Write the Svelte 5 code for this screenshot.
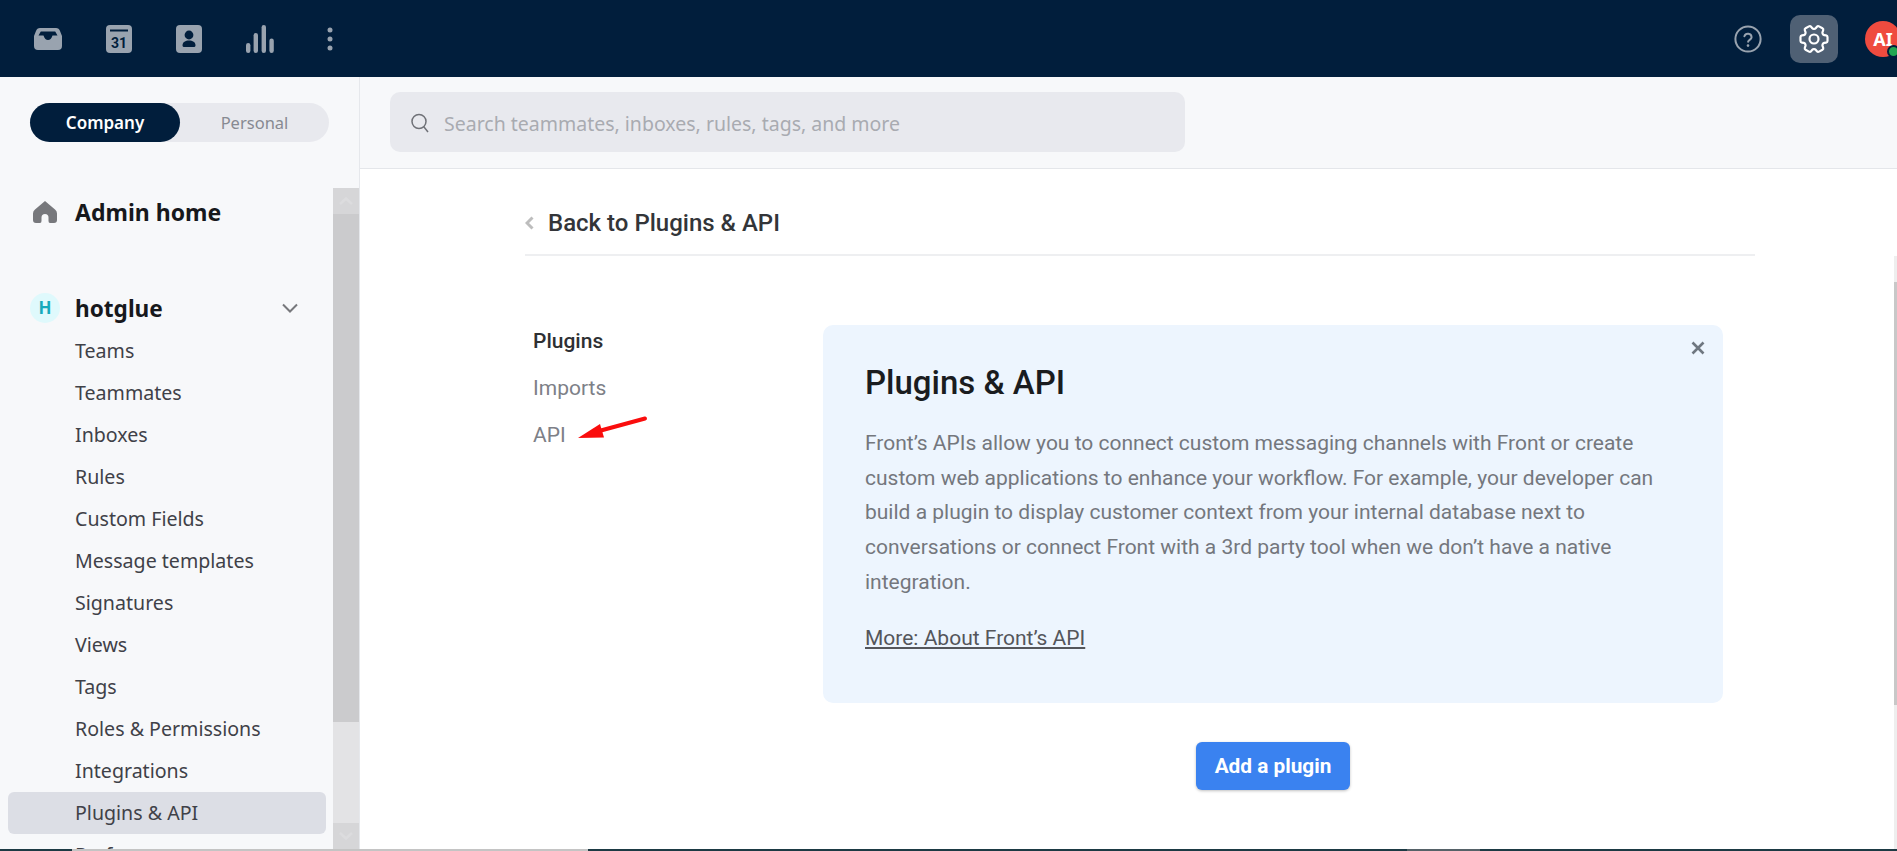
<script>
  const items = ['Teams', 'Teammates', 'Inboxes', 'Rules', 'Custom Fields', 'Message templates', 'Signatures', 'Views', 'Tags', 'Roles & Permissions', 'Integrations', 'Plugins & API', 'Preferences'];
  const active = 'Plugins & API';
</script>

<div class="app">
  <header class="topbar">
    <div class="top-left">
      <svg class="ico" width="28" height="22" viewBox="0 0 28 22">
        <path fill="#99a3af" d="M6 0H22Q25 0 26 3L28 8V18Q28 22 24 22H4Q0 22 0 18V8L2 3Q3 0 6 0Z" />
        <path fill="#011e3c" d="M4.5 7.5L6.8 3.4H21.2L23.5 7.5H18.5C17.5 10.5 16 12 14 12C12 12 10.5 10.5 9.5 7.5Z" />
      </svg>
      <svg class="ico" width="26" height="28" viewBox="0 0 26 28">
        <rect width="26" height="28" rx="4" fill="#99a3af" />
        <rect x="4" y="4.5" width="18" height="2" fill="#011e3c" />
        <text x="13" y="23" text-anchor="middle" class="cal">31</text>
      </svg>
      <svg class="ico" width="26" height="28" viewBox="0 0 26 28">
        <rect width="26" height="28" rx="4" fill="#99a3af" />
        <circle cx="13" cy="10" r="4.4" fill="#011e3c" />
        <path fill="#011e3c" d="M6.5 20.5C6.5 17 9.5 15.6 13 15.6C16.5 15.6 19.5 17 19.5 20.5C19.5 21.5 18.5 22 17.5 22H8.5C7.5 22 6.5 21.5 6.5 20.5Z" />
      </svg>
      <svg class="ico" width="28" height="28" viewBox="0 0 28 28" fill="#99a3af">
        <rect x="0" y="18" width="4.4" height="10" rx="2.2" />
        <rect x="7.6" y="8" width="4.4" height="20" rx="2.2" />
        <rect x="15.6" y="0" width="4.4" height="28" rx="2.2" />
        <rect x="23.4" y="13.5" width="4.4" height="14.5" rx="2.2" />
      </svg>
      <svg class="ico" width="6" height="24" viewBox="0 0 6 24" fill="#99a3af">
        <circle cx="3" cy="3" r="2.5" />
        <circle cx="3" cy="12" r="2.5" />
        <circle cx="3" cy="21" r="2.5" />
      </svg>
    </div>
    <div class="top-right">
      <svg width="28" height="28" viewBox="0 0 28 28" fill="none" stroke="#99a3af" stroke-width="2">
        <circle cx="14" cy="14" r="12.6" />
        <path stroke-linecap="round" d="M10.4 11.2a3.7 3.7 0 0 1 7.2 1c0 2.4-3.500 2.800-3.500 4.600" />
        <circle cx="14" cy="20.600" r="1.300" fill="#99a3af" stroke="none" />
      </svg>
      <div class="gear">
        <svg width="36" height="36" viewBox="0 0 24 24" fill="none" stroke="#fff" stroke-width="1.450">
          <g transform="rotate(90 12 12)">
            <path stroke-linejoin="round" d="M9.594 3.94c.09-.542.56-.94 1.11-.94h2.593c.55 0 1.02.398 1.11.94l.213 1.281c.063.374.313.686.645.87.074.04.147.083.22.127.324.196.72.257 1.075.124l1.217-.456a1.125 1.125 0 011.37.49l1.296 2.247a1.125 1.125 0 01-.26 1.431l-1.003.827c-.293.24-.438.613-.431.992a6.759 6.759 0 010 .255c-.007.378.138.75.43.99l1.005.828c.424.35.534.954.26 1.43l-1.298 2.247a1.125 1.125 0 01-1.369.491l-1.217-.456c-.355-.133-.75-.072-1.076.124a6.57 6.57 0 01-.22.128c-.331.183-.581.495-.644.869l-.213 1.28c-.09.543-.56.941-1.11.941h-2.594c-.55 0-1.02-.398-1.11-.94l-.213-1.281c-.062-.374-.312-.686-.644-.87a6.52 6.52 0 01-.22-.127c-.325-.196-.72-.257-1.076-.124l-1.217.456a1.125 1.125 0 01-1.369-.49l-1.297-2.247a1.125 1.125 0 01.26-1.431l1.004-.827c.292-.24.437-.613.43-.992a6.932 6.932 0 010-.255c.007-.378-.138-.75-.43-.99l-1.004-.828a1.125 1.125 0 01-.26-1.43l1.297-2.247a1.125 1.125 0 011.37-.491l1.216.456c.356.133.751.072 1.076-.124.072-.044.146-.087.22-.128.332-.183.582-.495.644-.869l.214-1.281z" />
            <circle cx="12" cy="12" r="3" />
          </g>
        </svg>
      </div>
      <div class="avatar">AI<span class="online"></span></div>
    </div>
  </header>

  <div class="body">
    <aside class="sidebar">
      <div class="toggle-wrap">
        <div class="toggle">
          <span class="tab on">Company</span>
          <span class="tab">Personal</span>
        </div>
      </div>
      <div class="side-scroll">
        <nav class="side-list">
          <div class="admin">
            <svg width="24" height="22" viewBox="0 0 24 22">
              <path fill="#77787c" d="M12 0L22 8.500Q24 10 24 12.500V19Q24 22 21 22H17Q15.500 22 15.500 20V16.500A3.500 3.500 0 0 0 8.500 16.500V20Q8.500 22 7 22H3Q0 22 0 19V12.500Q0 10 2 8.500Z" />
            </svg>
            <span>Admin home</span>
          </div>
          <div class="org">
            <span class="org-badge">H</span>
            <span class="org-name">hotglue</span>
            <svg class="chev" width="16" height="10" viewBox="0 0 16 10" fill="none" stroke="#77787c" stroke-width="2">
              <path d="M1 1.500L8 8.500L15 1.500" />
            </svg>
          </div>
          {#each items as item}
            <div class="item" class:active={item === active}>{item}</div>
          {/each}
        </nav>
        <div class="bar">
          <div class="bar-btn">
            <svg width="14" height="8" viewBox="0 0 14 8" fill="none" stroke="#dcdcde" stroke-width="2.500"><path d="M1 7L7 1.500L13 7" /></svg>
          </div>
          <div class="bar-thumb"></div>
          <div class="bar-track"></div>
          <div class="bar-btn low">
            <svg width="14" height="8" viewBox="0 0 14 8" fill="none" stroke="#dcdcde" stroke-width="2.500"><path d="M1 1L7 6.500L13 1" /></svg>
          </div>
        </div>
      </div>
    </aside>

    <main class="main">
      <div class="searchbar">
        <div class="search">
          <svg width="20" height="22" viewBox="0 0 20 22" fill="none" stroke="#6f7177" stroke-width="1.500">
            <circle cx="9" cy="9.500" r="7" />
            <path d="M13.800 14.800L18 20" />
          </svg>
          <span>Search teammates, inboxes, rules, tags, and more</span>
        </div>
      </div>

      <div class="content">
        <div class="back">
          <svg width="9" height="14" viewBox="0 0 9 14" fill="none" stroke="#bdbdbd" stroke-width="3"><path d="M7.500 1.500L2 7L7.500 12.500" /></svg>
          <span>Back to Plugins &amp; API</span>
        </div>
        <div class="columns">
          <nav class="subnav">
            <div class="sub on">Plugins</div>
            <div class="sub">Imports</div>
            <div class="sub">API</div>
            <svg class="arrow" width="72" height="24" viewBox="0 0 72 24">
              <path d="M68 3.500L22 16" stroke="#fa0d0d" stroke-width="4" stroke-linecap="round" fill="none" />
              <path d="M1 23L23 9L27 22.500Z" fill="#fa0d0d" />
            </svg>
          </nav>
          <div class="panel">
            <section class="card">
              <svg class="close" width="14" height="14" viewBox="0 0 14 14" stroke="#6f7780" stroke-width="2.600"><path d="M1.500 1.500L12.500 12.500M12.500 1.500L1.500 12.500" /></svg>
              <h1>Plugins &amp; API</h1>
              <p>Front’s APIs allow you to connect custom messaging channels with Front or create custom web applications to enhance your workflow. For example, your developer can build a plugin to display customer context from your internal database next to conversations or connect Front with a 3rd party tool when we don’t have a native integration.</p>
              <a href="#more">More: About Front’s API</a>
            </section>
            <button>Add a plugin</button>
          </div>
        </div>
      </div>
      <div class="page-bar"><div class="page-thumb"></div></div>
    </main>
  </div>

  <div class="taskbar">
    <div class="tb-dark"></div>
    <div class="tb-gray"></div>
    <div class="tb-dark mid"></div>
    <div class="tb-light"></div>
    <div class="tb-dark end"></div>
  </div>
</div>

<style>
:global(body) {
  margin: 0;
  overflow: hidden;
  background: #fff;
}
.app {
  width: 1897px;
  height: 851px;
  display: flex;
  flex-direction: column;
  overflow: hidden;
  font-family: Roboto, sans-serif;
}
.topbar {
  height: 77px;
  flex: none;
  background: #011e3c;
  display: flex;
  align-items: center;
  justify-content: space-between;
}
.top-left {
  display: flex;
  align-items: center;
  padding-left: 34px;
  gap: 44px;
}
.top-left .ico:nth-child(5) { margin-left: 9px; }
.cal {
  font: 700 14px Roboto, sans-serif;
  fill: #011e3c;
}
.top-right {
  display: flex;
  align-items: center;
  width: 167px;
  margin-right: -4px;
  flex: none;
}
.gear {
  width: 48px;
  height: 48px;
  margin-left: 28px;
  border-radius: 10px;
  background: #4f6074;
  display: flex;
  align-items: center;
  justify-content: center;
}
.avatar {
  position: relative;
  flex: none;
  width: 36px;
  height: 36px;
  margin-left: 27px;
  border-radius: 50%;
  background: #ef4b3f;
  color: #fff;
  font: 700 18px/36px "Noto Sans", sans-serif;
  text-align: center;
}
.online {
  position: absolute;
  right: 1px;
  bottom: -1px;
  width: 9px;
  height: 9px;
  border: 2px solid #011e3c;
  border-radius: 50%;
  background: #22a652;
}
.body {
  flex: 1;
  min-height: 0;
  display: flex;
}
.sidebar {
  width: 360px;
  flex: none;
  box-sizing: border-box;
  background: #f7f8fa;
  border-right: 1px solid #e6e8ec;
  display: flex;
  flex-direction: column;
  font-family: "Noto Sans", sans-serif;
}
.toggle-wrap {
  height: 111px;
  flex: none;
  padding: 26px 0 0 30px;
  box-sizing: border-box;
}
.toggle {
  width: 299px;
  height: 39px;
  display: flex;
  border-radius: 20px;
  background: #e8e9ee;
}
.tab {
  flex: 1;
  text-align: center;
  font-size: 16.500px;
  line-height: 39px;
  color: #878a92;
}
.tab.on {
  flex: none;
  width: 150px;
  border-radius: 20px;
  background: #011e3c;
  color: #fff;
  font-size: 17px;
  font-weight: 600;
}
.side-scroll {
  flex: 1;
  min-height: 0;
  display: flex;
}
.side-list {
  flex: 1;
  min-width: 0;
  overflow: hidden;
}
.admin {
  height: 42px;
  margin: 3px 0 53px;
  padding-left: 33px;
  display: flex;
  align-items: center;
  gap: 18px;
  font-size: 23px;
  font-weight: 700;
  color: #17181c;
}
.org {
  height: 44px;
  padding-left: 30px;
  display: flex;
  align-items: center;
  font-size: 22.600px;
  font-weight: 700;
  color: #17181c;
}
.org-badge {
  width: 30px;
  height: 30px;
  border-radius: 50%;
  background: #dff9fc;
  color: #16a9bb;
  font-size: 17px;
  line-height: 30px;
  text-align: center;
}
.org-name {
  margin-left: 15px;
  width: 207px;
}
.item {
  height: 42px;
  margin: 0 7px 0 8px;
  padding-left: 67px;
  border-radius: 6px;
  font-size: 19.600px;
  line-height: 42px;
  color: #3f4148;
}
.item.active { background: #dcdee5; }
.bar {
  width: 26px;
  flex: none;
  display: flex;
  flex-direction: column;
  background: #e3e3e5;
}
.bar-btn {
  height: 26px;
  flex: none;
  background: #d6d6d8;
  display: flex;
  align-items: center;
  justify-content: center;
}
.bar-thumb {
  height: 508px;
  flex: none;
  background: #cbcbcd;
}
.bar-track { flex: 1; }
.main {
  position: relative;
  flex: 1;
  min-width: 0;
  display: flex;
  flex-direction: column;
}
.searchbar {
  height: 92px;
  flex: none;
  box-sizing: border-box;
  padding: 15px 0 0 30px;
  background: #f7f8fa;
  border-bottom: 1px solid #e4e6ea;
}
.search {
  width: 795px;
  height: 60px;
  box-sizing: border-box;
  padding: 2px 0 0 20px;
  display: flex;
  align-items: center;
  gap: 14px;
  border-radius: 10px;
  background: #e8e9ee;
  font-family: "Noto Sans", sans-serif;
  font-size: 19.500px;
  color: #a9abb1;
}
.content {
  width: 1230px;
  margin-left: 165px;
}
.back {
  height: 87px;
  box-sizing: border-box;
  padding-top: 22px;
  border-bottom: 2px solid #eeeff1;
  display: flex;
  align-items: center;
  gap: 14px;
  font-size: 24px;
  font-weight: 500;
  color: #333539;
}
.columns {
  display: flex;
  padding-left: 8px;
}
.subnav {
  position: relative;
  width: 290px;
  flex: none;
  padding-top: 62px;
}
.sub {
  height: 46.800px;
  font-size: 21px;
  line-height: 47px;
  color: #7d8087;
}
.sub.on {
  font-weight: 500;
  color: #2e3033;
}
.arrow {
  position: absolute;
  left: 44px;
  top: 159px;
}
.panel {
  width: 900px;
  flex: none;
  padding-top: 69px;
  display: flex;
  flex-direction: column;
  align-items: center;
}
.card {
  position: relative;
  width: 100%;
  height: 378px;
  box-sizing: border-box;
  padding: 37px 42px 0;
  border-radius: 10px;
  background: #edf5fe;
}
.close {
  position: absolute;
  right: 18px;
  top: 16px;
}
h1 {
  margin: 0;
  font-size: 33px;
  line-height: 42px;
  font-weight: 500;
  color: #1a1c1f;
}
p {
  margin: 22px 0 0;
  font-size: 21px;
  line-height: 34.700px;
  color: #74777d;
}
.card a {
  display: inline-block;
  margin-top: 21px;
  font-size: 21px;
  line-height: 34px;
  color: #54565b;
  text-decoration: underline;
}
button {
  margin-top: 39px;
  width: 154px;
  height: 48px;
  border: 0;
  border-radius: 6px;
  background: #3a82f0;
  color: #fff;
  font: 700 20.800px Roboto, sans-serif;
  box-shadow: 0 1px 3px rgba(0, 0, 0, 0.25);
}
.page-bar {
  position: absolute;
  right: 0;
  top: 179px;
  width: 3px;
  bottom: 0;
  background: #eeeeee;
}
.page-thumb {
  margin-top: 26px;
  height: 423px;
  background: #c8c8c8;
}
.taskbar {
  height: 2px;
  flex: none;
  display: flex;
}
.tb-dark { width: 72px; background: #1d3a44; }
.tb-gray { width: 516px; background: #c4c4c4; }
.tb-dark.mid { width: 819px; }
.tb-light { width: 73px; background: #566268; }
.tb-dark.end { flex: 1; }
</style>
